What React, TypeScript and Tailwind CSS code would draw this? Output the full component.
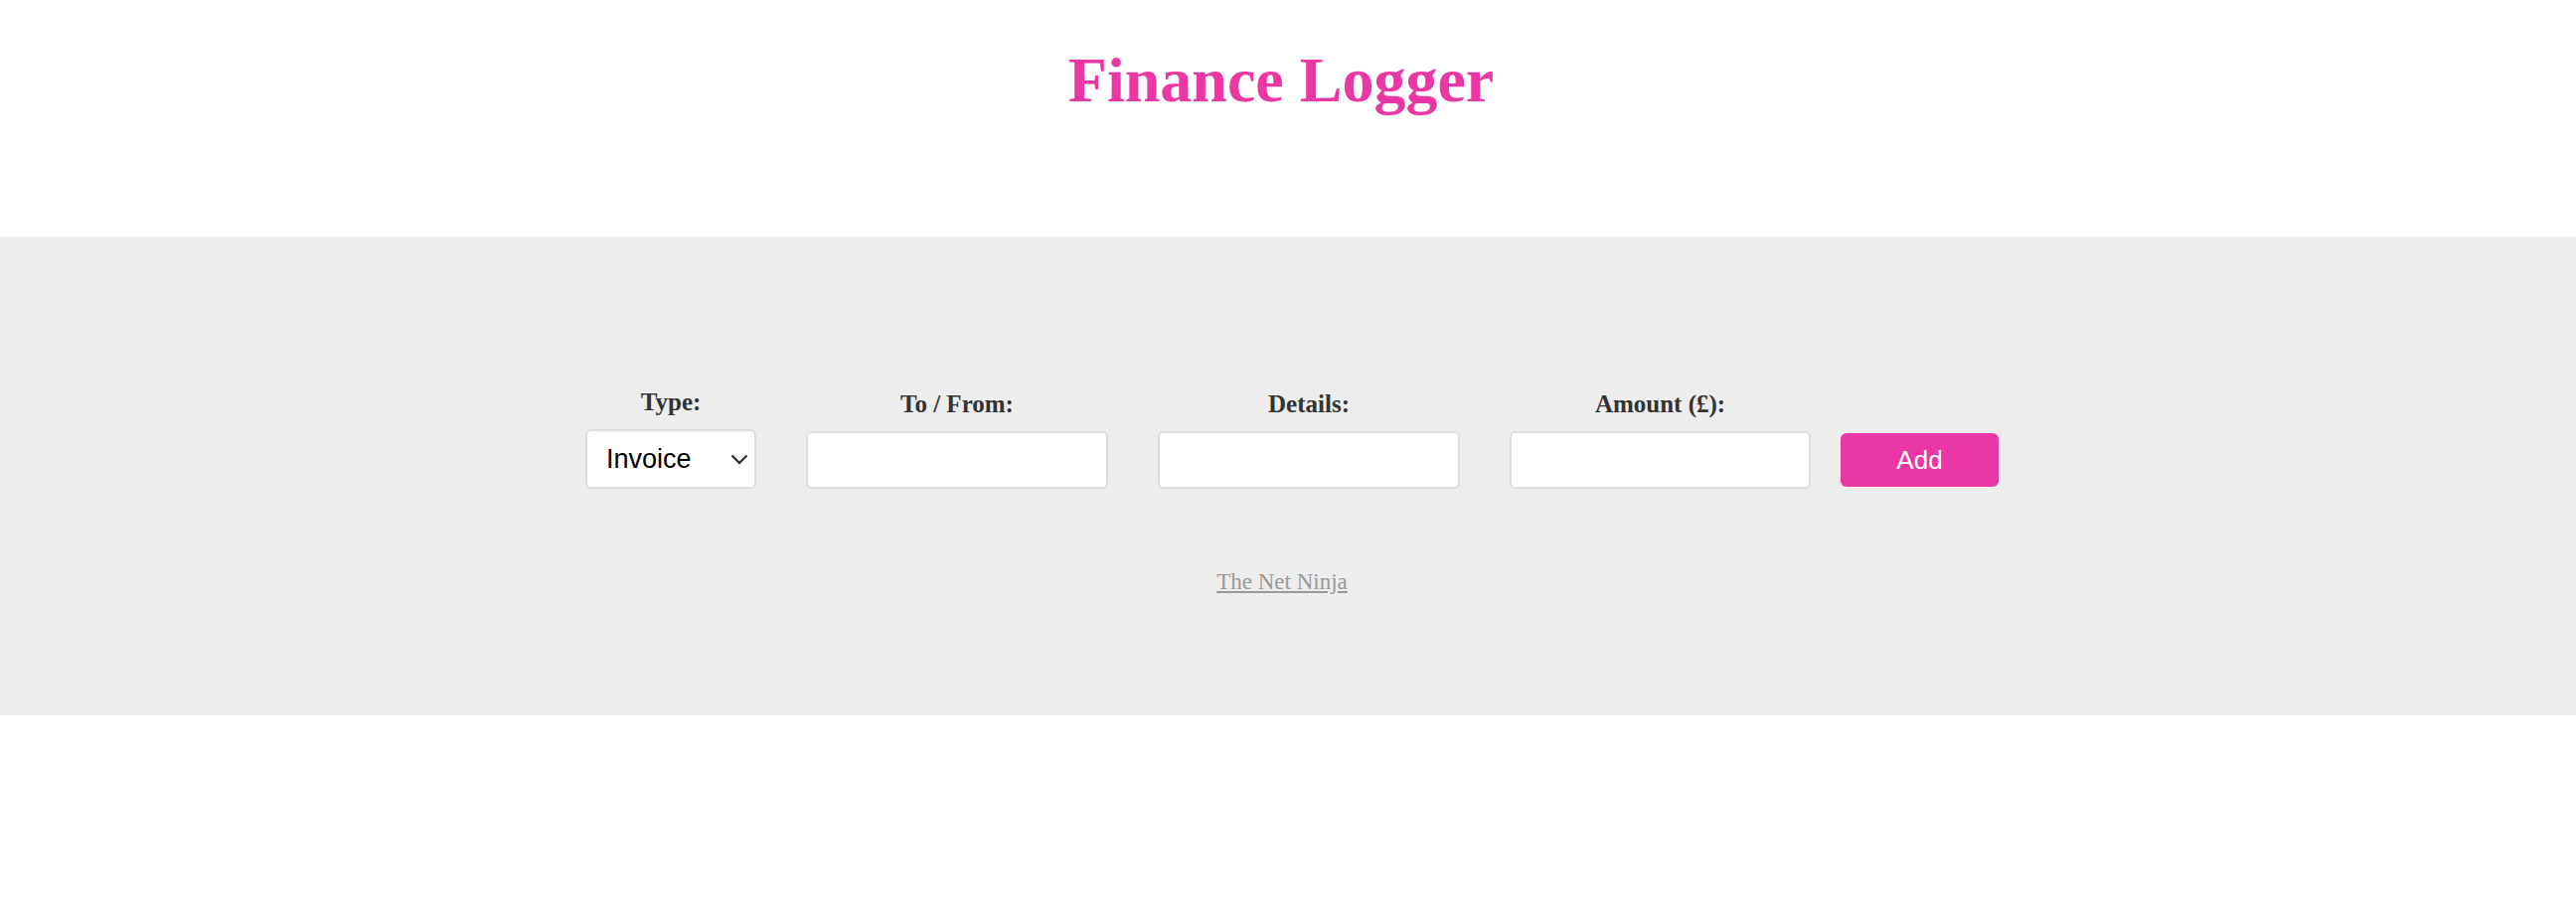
import React from "react";

export default function App() {
  return (
    <div className="min-h-screen bg-white font-['Liberation_Serif',_'Times_New_Roman',_serif]">
      <header className="pt-[49px] pb-[125px] pr-[14px] text-center">
        <h1 className="text-[64px] leading-[64px] font-bold text-[#ea37a4]">Finance Logger</h1>
      </header>
      <section className="bg-[#ededed] pt-[152px] pb-[120px]">
        <form className="flex items-end justify-center pl-[8px]" onSubmit={(e) => e.preventDefault()}>
          <div className="flex flex-col items-center w-[172px]">
            <label className="text-[25px] leading-[30px] font-bold text-[#333] mb-[12px]">Type:</label>
            <div className="relative w-[172px] h-[60px]">
              <select className="appearance-none w-full h-full bg-white border-2 border-[#dddddd] rounded-[6px] pl-[19px] text-[27px] text-black font-['Liberation_Sans',_Arial,_sans-serif] outline-none">
                <option>Invoice</option>
                <option>Payment</option>
              </select>
              <svg className="absolute right-[8px] top-[25px] pointer-events-none" width="18" height="11" viewBox="0 0 18 11" fill="none">
                <path d="M1.5 1.5 L9 9 L16.5 1.5" stroke="#222" strokeWidth="2" />
              </svg>
            </div>
          </div>
          <div className="flex flex-col items-center w-[304px] ml-[50px]">
            <label className="text-[25px] leading-[30px] font-bold text-[#333] mb-[12px]">To / From:</label>
            <input type="text" className="w-full h-[58px] bg-white border-2 border-[#dddddd] rounded-[6px] outline-none" />
          </div>
          <div className="flex flex-col items-center w-[304px] ml-[50px]">
            <label className="text-[25px] leading-[30px] font-bold text-[#333] mb-[12px]">Details:</label>
            <input type="text" className="w-full h-[58px] bg-white border-2 border-[#dddddd] rounded-[6px] outline-none" />
          </div>
          <div className="flex flex-col items-center w-[303px] ml-[50px]">
            <label className="text-[25px] leading-[30px] font-bold text-[#333] mb-[12px]">Amount (£):</label>
            <input type="number" className="w-full h-[58px] bg-white border-2 border-[#dddddd] rounded-[6px] outline-none" />
          </div>
          <button type="submit" className="ml-[30px] mb-[2px] w-[159px] h-[54px] bg-[#ea37a4] text-white rounded-[6px] text-[26px] font-['Liberation_Sans',_Arial,_sans-serif]">Add</button>
        </form>
        <div className="mt-[81px] text-center pr-[12px]">
          <a href="#" className="text-[23px] leading-[26px] text-[#999] underline">The Net Ninja</a>
        </div>
      </section>
    </div>
  );
}
